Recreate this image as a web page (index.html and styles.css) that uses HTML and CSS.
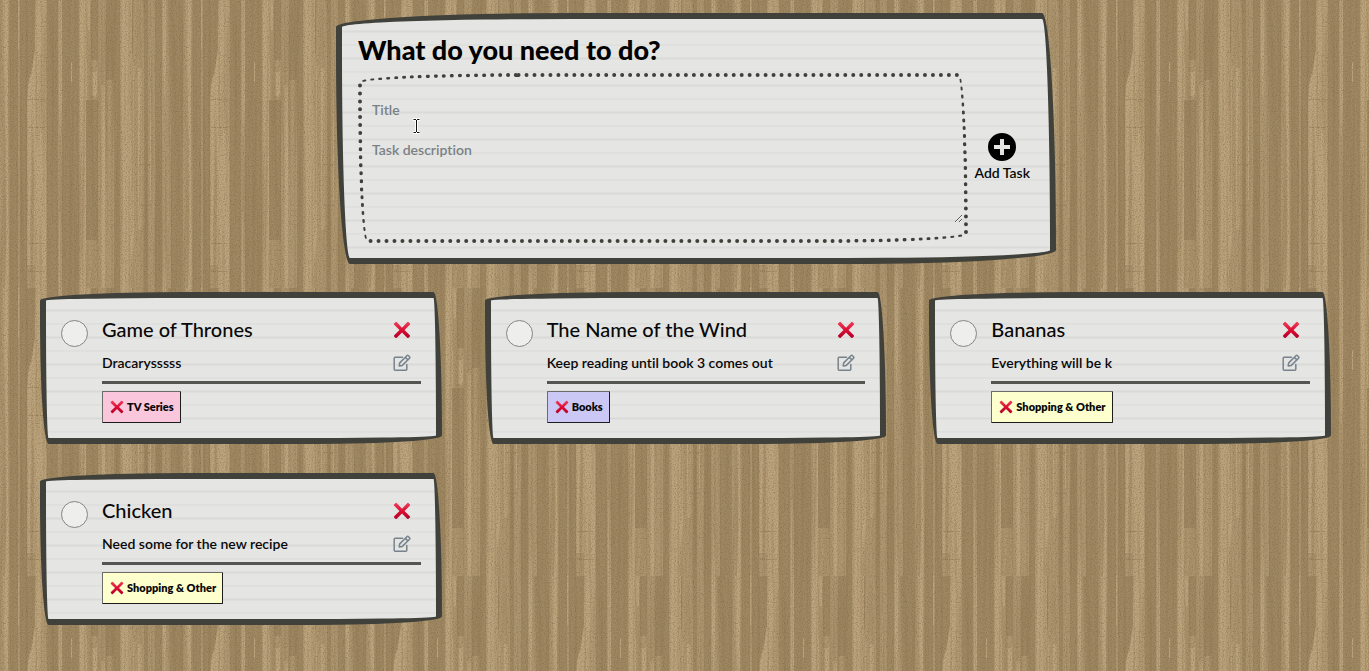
FILE: index.html
```html
<!DOCTYPE html>
<html lang="en">
<head>
<meta charset="utf-8">
<meta name="viewport" content="width=device-width, initial-scale=1">
<title>Tasks</title>
<link rel="stylesheet" href="styles.css">
</head>
<body>
<svg class="sprite" aria-hidden="true">
  <defs>
    <linearGradient id="red" x1="0" y1="0" x2="0" y2="1">
      <stop offset="0" stop-color="#ee4058"/>
      <stop offset=".5" stop-color="#dd0d33"/>
      <stop offset="1" stop-color="#b00028"/>
    </linearGradient>
  </defs>
  <symbol id="cross" viewBox="0 0 18 18">
    <path fill="url(#red)" d="M1 2.6 2.7 1Q3.300 .6 3.900 1.200L9 6.700 14.200 1.200Q14.800 .6 15.400 1L17 2.600Q17.300 3.100 16.800 3.700L11.500 9.100 16.800 14.300Q17.300 14.900 16.900 15.400L15.300 17Q14.700 17.300 14.200 16.800L9 11.600 3.800 16.800Q3.200 17.300 2.700 17L1.100 15.400Q.7 14.900 1.200 14.300L6.500 9.100 1.200 3.700Q.7 3.100 1 2.600Z"/>
  </symbol>
  <symbol id="pencil" viewBox="0 0 18 18">
    <path fill="none" stroke="#77838c" stroke-width="1.500" stroke-linejoin="round" stroke-linecap="round" d="M9.500 3.200H2.200Q1.200 3.200 1.200 4.200V15.300Q1.200 16.300 2.200 16.300H12.800Q13.800 16.300 13.800 15.300V10.500M6.200 11.900 6.700 8.900 13.900 1.700Q14.700 .9 15.500 1.700L16.500 2.700Q17.200 3.500 16.500 4.200L9.300 11.400ZM12.300 3.300 14.900 5.900"/>
  </symbol>
</svg>

<header class="top">
  <form class="paper composer">
    <h1 class="heading">What do you need to do?</h1>
    <div class="composer-row">
      <div class="fields">
        <input class="field" type="text" placeholder="Title" aria-label="Title">
        <textarea class="field area" placeholder="Task description" aria-label="Task description"></textarea>
        <svg class="pointer" viewBox="0 0 9 16" aria-hidden="true">
          <path fill="none" stroke="#fff" stroke-width="3" d="M1 1.500H8M4.500 1.500V14.500M1 14.500H8"/>
          <path fill="none" stroke="#111" d="M1.500 1.500H4M5 1.500H7.500M4.500 2V14M1.500 14.500H4M5 14.500H7.500"/>
        </svg>
      </div>
      <button class="add" type="button">
        <svg class="add-icon" viewBox="0 0 28 28" aria-hidden="true">
          <path fill-rule="evenodd" d="M14 0a14 14 0 1 0 0 28a14 14 0 1 0 0-28ZM12 6H16V12H22V16H16V22H12V16H6V12H12Z"/>
        </svg>
        <span>Add Task</span>
      </button>
    </div>
  </form>
</header>

<main class="tasks">
  <article class="paper task">
    <input class="check" type="checkbox" aria-label="Game of Thrones done">
    <div class="body">
      <div class="line"><h2 class="title">Game of Thrones</h2><button class="icon" type="button" aria-label="Delete"><svg><use href="#cross"/></svg></button></div>
      <div class="line second"><p class="text">Dracarysssss</p><button class="icon" type="button" aria-label="Edit"><svg><use href="#pencil"/></svg></button></div>
      <hr class="rule">
      <button class="tag pink" type="button"><svg class="tag-cross" aria-hidden="true"><use href="#cross"/></svg>TV Series</button>
    </div>
  </article>
  <article class="paper task">
    <input class="check" type="checkbox" aria-label="The Name of the Wind done">
    <div class="body">
      <div class="line"><h2 class="title">The Name of the Wind</h2><button class="icon" type="button" aria-label="Delete"><svg><use href="#cross"/></svg></button></div>
      <div class="line second"><p class="text">Keep reading until book 3 comes out</p><button class="icon" type="button" aria-label="Edit"><svg><use href="#pencil"/></svg></button></div>
      <hr class="rule">
      <button class="tag violet" type="button"><svg class="tag-cross" aria-hidden="true"><use href="#cross"/></svg>Books</button>
    </div>
  </article>
  <article class="paper task">
    <input class="check" type="checkbox" aria-label="Bananas done">
    <div class="body">
      <div class="line"><h2 class="title">Bananas</h2><button class="icon" type="button" aria-label="Delete"><svg><use href="#cross"/></svg></button></div>
      <div class="line second"><p class="text">Everything will be k</p><button class="icon" type="button" aria-label="Edit"><svg><use href="#pencil"/></svg></button></div>
      <hr class="rule">
      <button class="tag yellow" type="button"><svg class="tag-cross" aria-hidden="true"><use href="#cross"/></svg>Shopping &amp; Other</button>
    </div>
  </article>
  <article class="paper task">
    <input class="check" type="checkbox" aria-label="Chicken done">
    <div class="body">
      <div class="line"><h2 class="title">Chicken</h2><button class="icon" type="button" aria-label="Delete"><svg><use href="#cross"/></svg></button></div>
      <div class="line second"><p class="text">Need some for the new recipe</p><button class="icon" type="button" aria-label="Edit"><svg><use href="#pencil"/></svg></button></div>
      <hr class="rule">
      <button class="tag yellow" type="button"><svg class="tag-cross" aria-hidden="true"><use href="#cross"/></svg>Shopping &amp; Other</button>
    </div>
  </article>
</main>
</body>
</html>
```
FILE: styles.css
```css
* {
  box-sizing: border-box;
}

body {
  margin: 0;
  min-height: 100vh;
  font-family: Lato, "Open Sans", sans-serif;
  font-size: 14px;
  font-weight: 600;
  line-height: 20px;
  font-variant-ligatures: none;
  color: #080808;
  background-color: #a68f69;
  /* wood grain tile: planks, long streaks, fine specks */
  background-image: url("data:image/svg+xml,%3Csvg xmlns='http://www.w3.org/2000/svg' width='183' height='288'%3E%3Cfilter id='s' x='0' y='0' width='1' height='1' color-interpolation-filters='sRGB'%3E%3CfeTurbulence type='fractalNoise' baseFrequency='.35 .007' numOctaves='2' seed='4' stitchTiles='stitch'/%3E%3CfeColorMatrix values='0 0 0 0 .56 0 0 0 0 .46 0 0 0 0 .31 3 0 0 0 -1.250'/%3E%3C/filter%3E%3Cfilter id='n' x='0' y='0' width='1' height='1' color-interpolation-filters='sRGB'%3E%3CfeTurbulence type='fractalNoise' baseFrequency='.8' numOctaves='2' seed='9' stitchTiles='stitch'/%3E%3CfeColorMatrix values='0 0 0 0 .45 0 0 0 0 .37 0 0 0 0 .24 2 0 0 0 -.9'/%3E%3C/filter%3E%3Crect width='183' height='288' fill='%23ae9770'/%3E%3Cg fill='%239f8862'%3E%3Cpath d='M10 0H18V288H10ZM20 0H35V50L32 70 28 85 27 100V288H20ZM47 0H58V288H47ZM62 0H79V288H62ZM86 100H98V240H86ZM91 0H98V60H91ZM106 0H120V288H114V80H106ZM130 0H133V60H131ZM144 0H148V288H144ZM155 0H162V288H155ZM168 0H185V288H171V140Z'/%3E%3C/g%3E%3Cg fill='%23bca47d'%3E%3Cpath d='M3 0H9L8 90 9 288H5L6 150ZM18 0H19V50H18ZM36 0H46V288H35V265H27V100L28 85 32 70 35 50ZM59 0H62V98L60 144 59 100ZM59 230 60 210 62 230V288H59ZM80 0H90V30H87V100H86V288H80ZM92 72H97V96H92ZM101 85H105V288H101ZM71 62H72V82H71ZM121 0H132V50L134 70V240L131 265V288H121ZM138 68H142V230H138ZM150 40H151V200H150ZM163 0H166V60L165 110 163 60ZM163 288 165 240 166 288Z'/%3E%3C/g%3E%3Cpath d='M28 99.500H46M28 127.500H46M28 243.500H46M28 271.500H46M140 164.500H151M140 205.500H151' stroke='%238e7753' stroke-opacity='.5' stroke-dasharray='5 1'/%3E%3Crect width='183' height='288' filter='url(%23s)' opacity='.4'/%3E%3Crect width='183' height='288' filter='url(%23n)' opacity='.6'/%3E%3C/svg%3E");
}

h1, h2, p {
  margin: 0;
}

button {
  padding: 0;
  border: 0;
  background: none;
  font: inherit;
  color: inherit;
  cursor: pointer;
}

.sprite {
  position: absolute;
  width: 0;
  height: 0;
}

.paper {
  border: 6px solid #41413c;
  border-radius: 255px 15px 225px 15px / 15px 255px 15px 225px;
  background-color: #e5e5e3;
  background-image: linear-gradient(transparent 11px, #dadbd9 12px, #dadbd9 13px, transparent 14px, transparent 25px, #dadbd9 26px, transparent 27px);
  background-size: 100% 27px;
}

.top {
  padding: 13px 0 0 23px;
}

.composer {
  max-width: 720px;
  margin: 0 auto;
  padding: 13px 20px 15px 16px;
}

.heading {
  margin-bottom: 5px;
  font-size: 27px;
  font-weight: 900;
  line-height: 36px;
  color: #000;
}

.composer-row {
  display: flex;
  align-items: center;
  gap: 6px;
}

.fields {
  position: relative;
  display: flex;
  flex: 1;
  flex-direction: column;
  gap: 1px;
  padding: 12px 1px 16px;
  border: 4px dotted #41413c;
  border-radius: 255px 15px 225px 15px / 15px 255px 15px 225px;
}

.field {
  width: 100%;
  height: 40px;
  padding: 10px 9px;
  border: 0;
  outline: 0;
  background: none;
  font: inherit;
  color: inherit;
}

.field::placeholder {
  color: #7a8184;
}

.area {
  height: 93px;
  resize: vertical;
}

.pointer {
  position: absolute;
  top: 41px;
  left: 50px;
  width: 9px;
  height: 16px;
}

.add {
  display: flex;
  flex-direction: column;
  align-items: center;
  gap: 2px;
  white-space: nowrap;
}

.add-icon {
  width: 28px;
  height: 28px;
}

.tasks {
  display: grid;
  grid-template-columns: repeat(3, 1fr);
  gap: 29px 43px;
  padding: 28px 38px 46px 40px;
}

.task {
  display: flex;
  align-items: flex-start;
  gap: 14px;
  padding: 20px 15px 15px;
}

.check {
  flex: none;
  width: 27px;
  height: 27px;
  margin: 2px 0 0;
  appearance: none;
  border: 1px solid #858585;
  border-radius: 50%;
  background: #eeeeec;
}

.body {
  flex: 1;
}

.line {
  display: flex;
  align-items: center;
  justify-content: space-between;
  padding-right: 10px;
}

.second {
  margin-top: 12px;
}

.title {
  font-size: 20px;
  font-weight: 500;
  line-height: 23px;
}

.icon,
.icon svg {
  display: block;
  width: 18px;
  height: 18px;
}

.rule {
  height: 3px;
  margin: 8px 0 7px;
  border: 0;
  background: #555551;
}

.tag {
  display: flex;
  align-items: center;
  gap: 3px;
  height: 32px;
  padding: 0 6px 0 7px;
  border: 1px solid;
  border-color: #6b6b68 #1c1c1c #1c1c1c #6b6b68;
  border-radius: 1px;
  font-size: 11px;
  font-weight: 800;
}

.tag-cross {
  width: 14px;
  height: 14px;
}

.pink {
  background: #f9c6dc;
}

.violet {
  background: #cbc8f6;
}

.yellow {
  background: #fdffcd;
}

@media (max-width: 1000px) {
  .tasks {
    grid-template-columns: repeat(auto-fit, minmax(280px, 1fr));
  }
}
```
